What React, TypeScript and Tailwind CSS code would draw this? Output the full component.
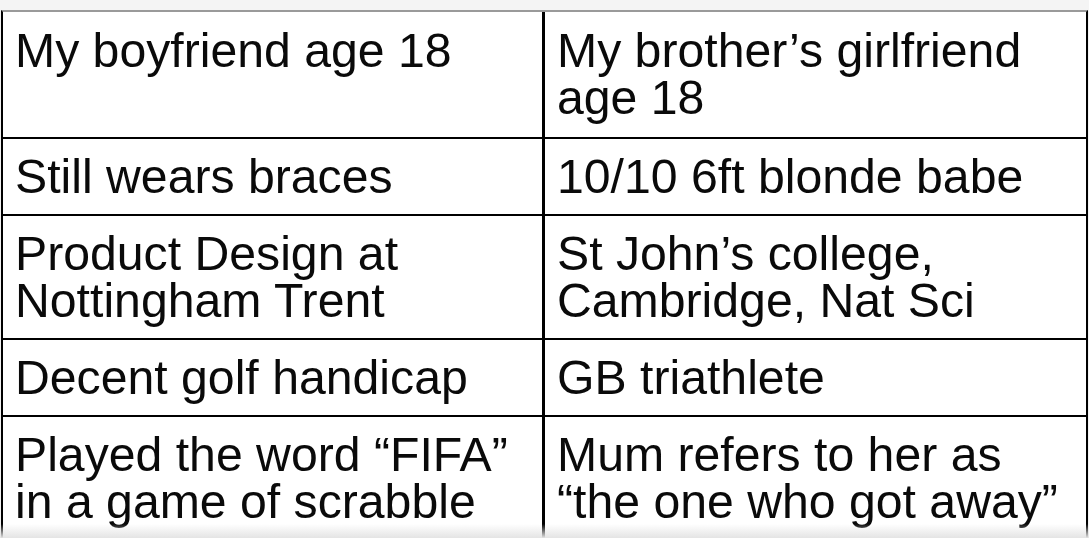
import React from "react";

const rows: { h: string; pt: string; left: string[]; right: string[]; last?: boolean }[] = [
  { h: "h-[127px]", pt: "pt-[15px]", left: ["My boyfriend age 18"], right: ["My brother’s girlfriend", "age 18"] },
  { h: "h-[77px]", pt: "pt-[14px]", left: ["Still wears braces"], right: ["10/10 6ft blonde babe"] },
  { h: "h-[124px]", pt: "pt-[14px]", left: ["Product Design at", "Nottingham Trent"], right: ["St John’s college,", "Cambridge, Nat Sci"] },
  { h: "h-[77px]", pt: "pt-[14px]", left: ["Decent golf handicap"], right: ["GB triathlete"] },
  { h: "h-[140px]", pt: "pt-[14px]", left: ["Played the word “FIFA”", "in a game of scrabble"], right: ["Mum refers to her as", "“the one who got away”"], last: true },
];

export default function App() {
  return (
    <div className="relative w-[1089px] h-[538px] overflow-hidden bg-[#f2f2f2] font-['Liberation_Sans',Arial,sans-serif] text-[#0a0a0a]">
      <div className="h-[10px] bg-[#f4f4f4]" />
      <div className="ml-[1px] w-[1087px] border-t-2 border-t-[#9a9a9a] border-x-2 border-x-black bg-white">
        {rows.map((r, i) => (
          <div
            key={i}
            className={`flex ${r.h} ${r.last ? "" : "border-b-2 border-black"}`}
          >
            <div className={`w-[542px] shrink-0 border-r-[3px] border-black pl-[12px] ${r.pt}`}>
              {r.left.map((t, j) => (
                <div key={j} className="text-[48.2px] leading-[47px] whitespace-nowrap">
                  {t}
                </div>
              ))}
            </div>
            <div className={`flex-1 pl-[12px] ${r.pt}`}>
              {r.right.map((t, j) => (
                <div key={j} className="text-[48.2px] leading-[47px] whitespace-nowrap">
                  {t}
                </div>
              ))}
            </div>
          </div>
        ))}
      </div>
      <div className="absolute left-0 right-0 bottom-0 h-[14px] bg-gradient-to-b from-transparent to-[#e4e4e4]" />
    </div>
  );
}
